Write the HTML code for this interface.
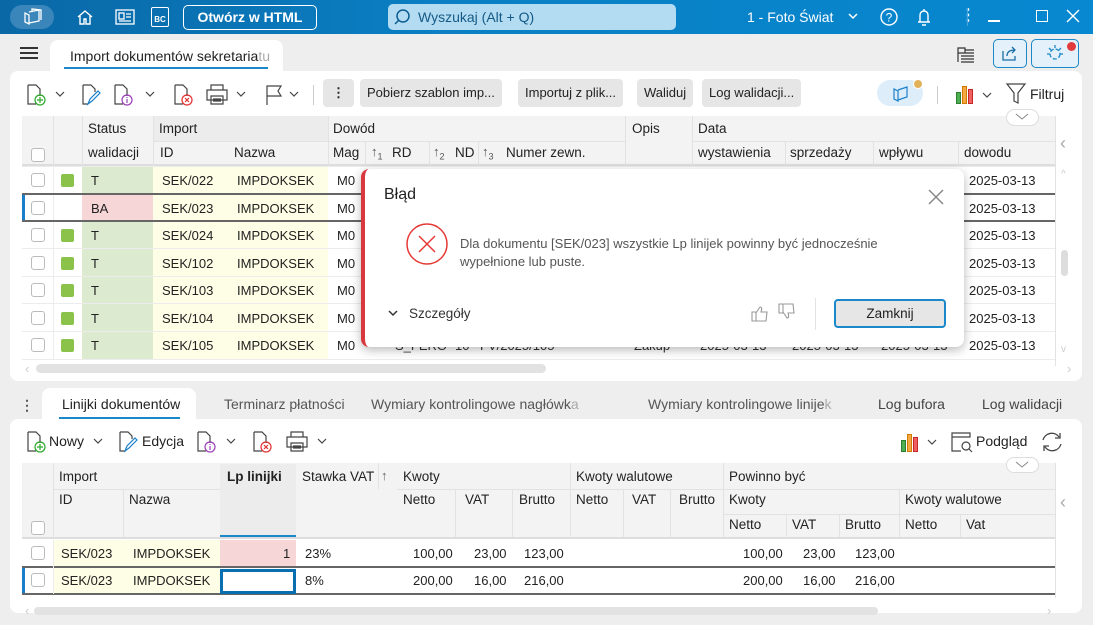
<!DOCTYPE html>
<html><head><meta charset="utf-8"><style>
*{box-sizing:border-box;margin:0;padding:0}
body{width:1093px;height:625px;overflow:hidden;background:#eeeeee;font-family:"Liberation Sans",sans-serif;font-size:13px;color:#222;position:relative}
.a{position:absolute}
.t{position:absolute;white-space:nowrap;line-height:1}
.bar{background:linear-gradient(90deg,#0a68a6,#0a7fc3 40%,#0788d0);height:34px;left:0;top:0;width:1093px}
.panel{background:#fff;border-radius:8px}
.btn{position:absolute;background:#e6e6e6;border-radius:4px;height:28px;line-height:28px;padding:0 7px;font-size:13px;color:#222}
.h{background:#f3f3f3}
.cb{position:absolute;width:14px;height:14px;border:1px solid #bbb;border-radius:3px;background:#fff}
.gs{position:absolute;width:13px;height:13px;background:#8bc34a;border-radius:2px}
</style></head><body>
<div class="a bar"></div>
<div class="a" style="left:10px;top:5px;width:44px;height:24px;border-radius:12px;background:#3a86ba"></div>
<svg class="a" style="left:22px;top:8px" width="22" height="18" viewBox="0 0 22 18" fill="none" stroke="#fff" stroke-width="1.3"><path d="M3 5v9l4 2V7z M7 4l10-2v11l-10 2 M10 3V1l9 1v10"/></svg>
<svg class="a" style="left:76px;top:8px" width="18" height="18" viewBox="0 0 18 18" fill="none" stroke="#fff" stroke-width="1.4"><path d="M2 9l7-6 7 6M4 8v8h4v-5h2v5h4V8"/></svg>
<svg class="a" style="left:115px;top:9px" width="20" height="16" viewBox="0 0 20 16" fill="none" stroke="#fff" stroke-width="1.3"><rect x="1" y="1" width="18" height="14"/><rect x="4" y="4" width="5" height="6"/><path d="M11 5h5M11 8h5M4 12h12"/></svg>
<div class="a" style="left:151px;top:7px;width:18px;height:20px;border:1.3px solid #fff;border-radius:2px;color:#fff;font-size:8px;font-weight:bold;text-align:center;line-height:24px">BC</div>
<div class="a" style="left:183px;top:5px;width:134px;height:25px;border:1px solid #fff;border-radius:5px;color:#fff;font-weight:bold;font-size:14px;text-align:center;line-height:23px">Otwórz w HTML</div>
<div class="a" style="left:388px;top:4px;width:288px;height:26px;background:#b3dcf3;border-radius:5px"></div>
<svg class="a" style="left:393px;top:8px" width="18" height="18" viewBox="0 0 18 18" fill="none" stroke="#0a5d92" stroke-width="1.5"><circle cx="10" cy="8" r="6"/><path d="M6 12l-4 4"/></svg>
<div class="t" style="left:418px;top:10px;color:#155a86;font-size:14px">Wyszukaj (Alt + Q)</div>
<div class="t" style="left:747px;top:10px;color:#fff;font-size:14px">1 - Foto Świat</div>
<svg class="a" style="left:847px;top:12px" width="12" height="8"><path d="M2 2l4 4 4-4" stroke="#fff" stroke-width="1.5" fill="none"/></svg>
<svg class="a" style="left:879px;top:7px" width="20" height="20"><circle cx="10" cy="10" r="8" stroke="#fff" stroke-width="1.4" fill="none"/><text x="10" y="14.5" fill="#fff" font-size="12" text-anchor="middle" font-family="Liberation Sans">?</text></svg>
<svg class="a" style="left:914px;top:6px" width="20" height="22" fill="none" stroke="#fff" stroke-width="1.4"><path d="M4 16h12M6 16V9a4 4 0 018 0v7M10 3v2M8 19h4"/></svg>
<div class="t" style="left:960px;top:8px;color:#fff;font-size:16px;font-weight:bold">⋮</div>
<div class="a" style="left:967px;top:8px;width:1px;height:18px;background:#4aa6dd;left:967px"></div>
<div class="a" style="left:988px;top:20px;width:12px;height:1.5px;background:#fff"></div>
<div class="a" style="left:1036px;top:10px;width:12px;height:12px;border:1.4px solid #fff"></div>
<svg class="a" style="left:1066px;top:9px" width="14" height="14" stroke="#fff" stroke-width="1.4"><path d="M1 1l12 12M13 1L1 13"/></svg>

<div class="a" style="left:20px;top:47px;width:18px;height:2px;background:#333;box-shadow:0 5px 0 #333,0 10px 0 #333"></div>
<div class="a" style="left:50px;top:40px;width:233px;height:36px;background:#fff;border-radius:8px 8px 0 0"></div>
<div class="t" style="left:70px;top:49px;font-size:14px;color:#222">Import dokumentów sekretaria<span style="color:#aaa">tu</span></div>
<div class="a" style="left:64px;top:67px;width:204px;height:2px;background:#1a88c9"></div>
<svg class="a" style="left:955px;top:45px" width="22" height="20" fill="none" stroke="#333" stroke-width="1.2"><path d="M3 3h7v5H3zM3 3v14M10 5h9M10 8h9M6 11h13M6 14h13M6 17h13"/></svg>
<div class="a" style="left:993px;top:39px;width:34px;height:29px;border:1px solid #1a88c9;border-radius:5px;background:#e4f1fa"></div>
<svg class="a" style="left:1001px;top:44px" width="18" height="18" fill="none" stroke="#1a6fa6" stroke-width="1.3"><path d="M2 7v9h12v-4M6 12c0-4 3-6 8-6M11 3l3 3-3 3"/></svg>
<div class="a" style="left:1031px;top:39px;width:48px;height:29px;border:1px solid #1a88c9;border-radius:5px;background:#e4f1fa"></div>
<svg class="a" style="left:1044px;top:43px" width="22" height="22" fill="none" stroke="#1a88c9" stroke-width="1.3"><circle cx="11" cy="11" r="5" stroke-dasharray="4 2"/><path d="M11 2v3M3 11h3M16 11h3M5 5l2 2M17 5l-2 2"/></svg>
<div class="a" style="left:1067px;top:42px;width:9px;height:9px;border-radius:50%;background:#e23b3b"></div>

<div class="a panel" style="left:10px;top:71px;width:1072px;height:310px"></div>
<svg class="a" style="left:25px;top:84px" width="22" height="22" fill="none" stroke-width="1.2"><path d="M3 1h8l4 4v7M3 1v19h8" stroke="#444"/><circle cx="15" cy="16" r="5" stroke="#2aa82a"/><path d="M15 13v6M12 16h6" stroke="#2aa82a"/></svg>
<svg class="a" style="left:55px;top:91px" width="10" height="6"><path d="M1 1l4 4 4-4" stroke="#444" fill="none" stroke-width="1.2"/></svg>
<svg class="a" style="left:80px;top:84px" width="22" height="22" fill="none" stroke-width="1.2"><path d="M3 1h8l4 4v3M3 1v19h5" stroke="#444"/><path d="M8 20l2-5 8-8 2 2-8 8z" stroke="#1a7fc9"/></svg>
<svg class="a" style="left:112px;top:84px" width="22" height="22" fill="none" stroke-width="1.2"><path d="M3 1h8l4 4v7M3 1v19h8" stroke="#444"/><circle cx="15" cy="16" r="5" stroke="#9a3fb5"/><path d="M15 15v4M15 13v1" stroke="#9a3fb5"/></svg>
<svg class="a" style="left:145px;top:91px" width="10" height="6"><path d="M1 1l4 4 4-4" stroke="#444" fill="none" stroke-width="1.2"/></svg>
<svg class="a" style="left:172px;top:84px" width="22" height="22" fill="none" stroke-width="1.2"><path d="M3 1h8l4 4v7M3 1v19h8" stroke="#444"/><circle cx="15" cy="16" r="5" stroke="#e03030"/><path d="M13 14l4 4M17 14l-4 4" stroke="#e03030"/></svg>
<svg class="a" style="left:205px;top:84px" width="24" height="22" fill="none" stroke="#444" stroke-width="1.2"><path d="M6 6V1h12v5M2 6h20v10H2zM6 12h12v8H6zM8 15h8M8 17h8"/></svg>
<svg class="a" style="left:236px;top:91px" width="10" height="6"><path d="M1 1l4 4 4-4" stroke="#444" fill="none" stroke-width="1.2"/></svg>
<svg class="a" style="left:264px;top:84px" width="22" height="22" fill="none" stroke="#444" stroke-width="1.2"><path d="M3 21V2h14l-3 5 3 5H3"/></svg>
<svg class="a" style="left:289px;top:91px" width="10" height="6"><path d="M1 1l4 4 4-4" stroke="#444" fill="none" stroke-width="1.2"/></svg>
<div class="a" style="left:313px;top:85px;width:1px;height:20px;background:#ccc"></div>
<div class="btn" style="left:323px;top:79px;width:31px;text-align:center;font-weight:bold">⋮</div>
<div class="btn" style="left:360px;top:79px">Pobierz szablon imp...</div>
<div class="btn" style="left:518px;top:79px">Importuj z plik...</div>
<div class="btn" style="left:637px;top:79px">Waliduj</div>
<div class="btn" style="left:702px;top:79px">Log walidacji...</div>
<div class="a" style="left:877px;top:80px;width:46px;height:26px;border-radius:13px;background:#ddeefa"></div>
<svg class="a" style="left:891px;top:83px" width="20" height="20" fill="none" stroke="#1a7fc9" stroke-width="1.2"><path d="M3 6v10l4 2V8zM7 7l9-3v10l-9 3"/></svg>
<div class="a" style="left:913px;top:79px;width:10px;height:10px;border-radius:50%;background:#e2b25a;border:1px solid #fff"></div>
<div class="a" style="left:937px;top:86px;width:1px;height:18px;background:#ccc"></div>
<div class="a" style="left:956px;top:92px;width:5px;height:12px;background:#4caf50;border:1px solid #2e7d32"></div>
<div class="a" style="left:962px;top:86px;width:5px;height:18px;background:#f5a742;border:1px solid #d07a00"></div>
<div class="a" style="left:968px;top:89px;width:5px;height:15px;background:#f06060;border:1px solid #c62828"></div>
<svg class="a" style="left:982px;top:92px" width="10" height="6"><path d="M1 1l4 4 4-4" stroke="#444" fill="none" stroke-width="1.2"/></svg>
<svg class="a" style="left:1005px;top:82px" width="22" height="24" fill="none" stroke="#444" stroke-width="1.2"><path d="M2 2h18l-7 9v10l-4-2v-8z"/></svg>
<div class="t" style="left:1030px;top:87px;font-size:14px">Filtruj</div>
<div class="a" style="left:1006px;top:109px;width:33px;height:17px;border-radius:9px;background:#fff;border:1px solid #ddd;z-index:3"></div>
<svg class="a" style="left:1015px;top:113px;z-index:4" width="14" height="8"><path d="M1 1l6 5 6-5" stroke="#888" fill="none"/></svg>

<div class="a h" style="left:22px;top:116px;width:1033px;height:50px;border-bottom:2px solid #ddd"></div>
<div class="a" style="left:1055px;top:116px;width:27px;height:250px;background:#fff;border-left:1px solid #e2e2e2"></div>
<div class="t" style="left:1060px;top:134px;color:#aaa;font-size:18px">‹</div>
<div class="cb" style="left:31px;top:148px"></div>
<div class="a" style="left:53px;top:116px;width:1px;height:50px;background:#e2e2e2"></div>
<div class="a" style="left:82px;top:116px;width:1px;height:50px;background:#e2e2e2"></div>
<div class="t" style="left:88px;top:122px;font-size:13.5px">Status</div>
<div class="t" style="left:88px;top:146px;font-size:13.5px">walidacji</div>
<div class="a" style="left:153px;top:116px;width:175px;height:25px;background:#ececec"></div>
<div class="a" style="left:153px;top:116px;width:1px;height:50px;background:#e2e2e2"></div>
<div class="t" style="left:159px;top:122px;font-size:13.5px">Import</div>
<div class="a" style="left:153px;top:141px;width:902px;height:1px;background:#e2e2e2"></div>
<div class="t" style="left:160px;top:146px;font-size:13.5px">ID</div>
<div class="t" style="left:234px;top:146px;font-size:13.5px">Nazwa</div>
<div class="a" style="left:328px;top:116px;width:1px;height:50px;background:#e2e2e2"></div>
<div class="t" style="left:333px;top:122px;font-size:13.5px">Dowód</div>
<div class="t" style="left:333px;top:146px;font-size:13.5px">Mag</div>
<div class="a" style="left:365px;top:141px;width:1px;height:25px;background:#e2e2e2"></div>
<div class="t" style="left:371px;top:145px;font-size:13px;color:#555">↑<sub style="font-size:9px">1</sub></div>
<div class="t" style="left:392px;top:146px;font-size:13.5px">RD</div>
<div class="a" style="left:429px;top:141px;width:1px;height:25px;background:#e2e2e2"></div>
<div class="t" style="left:433px;top:145px;font-size:13px;color:#555">↑<sub style="font-size:9px">2</sub></div>
<div class="t" style="left:455px;top:146px;font-size:13.5px">ND</div>
<div class="a" style="left:478px;top:141px;width:1px;height:25px;background:#e2e2e2"></div>
<div class="t" style="left:482px;top:145px;font-size:13px;color:#555">↑<sub style="font-size:9px">3</sub></div>
<div class="t" style="left:506px;top:146px;font-size:13.5px">Numer zewn.</div>
<div class="a" style="left:625px;top:116px;width:1px;height:50px;background:#e2e2e2"></div>
<div class="a" style="left:626px;top:141px;width:66px;height:1px;background:#f3f3f3"></div>
<div class="t" style="left:632px;top:122px;font-size:13.5px">Opis</div>
<div class="a" style="left:692px;top:116px;width:1px;height:50px;background:#e2e2e2"></div>
<div class="t" style="left:698px;top:122px;font-size:13.5px">Data</div>
<div class="t" style="left:698px;top:146px;font-size:13.5px">wystawienia</div>
<div class="a" style="left:785px;top:141px;width:1px;height:25px;background:#e2e2e2"></div>
<div class="t" style="left:790px;top:146px;font-size:13.5px">sprzedaży</div>
<div class="a" style="left:873px;top:141px;width:1px;height:25px;background:#e2e2e2"></div>
<div class="t" style="left:879px;top:146px;font-size:13.5px">wpływu</div>
<div class="a" style="left:958px;top:141px;width:1px;height:25px;background:#e2e2e2"></div>
<div class="t" style="left:964px;top:146px;font-size:13.5px">dowodu</div>

<div class="a" style="left:22px;top:167px;width:1033px;height:193px;background:#fff"></div>
<div class="a" style="left:82px;top:167px;width:71px;height:193px;background:#dcebd0"></div>
<div class="a" style="left:82px;top:194px;width:71px;height:27px;background:#f7d6d8"></div>
<div class="a" style="left:153px;top:167px;width:175px;height:193px;background:#fefee6"></div>
<div class="a" style="left:53px;top:167px;width:1px;height:193px;background:#ececec"></div>
<div class="a" style="left:22px;top:193px;width:1033px;height:2px;background:#666"></div>
<div class="a" style="left:22px;top:220px;width:1033px;height:2px;background:#666"></div>
<div class="a" style="left:22px;top:195px;width:3px;height:25px;background:#1a7fc9"></div>
<div class="a" style="left:22px;top:248px;width:1033px;height:1px;background:#ececec"></div>
<div class="a" style="left:22px;top:276px;width:1033px;height:1px;background:#ececec"></div>
<div class="a" style="left:22px;top:303px;width:1033px;height:1px;background:#ececec"></div>
<div class="a" style="left:22px;top:331px;width:1033px;height:1px;background:#ececec"></div>
<div class="a" style="left:22px;top:359px;width:1033px;height:1px;background:#ececec"></div>
<div class="a" style="left:22px;top:166px;width:1033px;height:1px;background:#ececec"></div>

<div class="cb" style="left:31px;top:173px"></div><div class="gs" style="left:61px;top:174px"></div><div class="t" style="left:91px;top:174px">T</div><div class="t" style="left:162px;top:174px">SEK/022</div><div class="t" style="left:237px;top:174px">IMPDOKSEK</div><div class="t" style="left:337px;top:174px">M0</div><div class="t" style="left:969px;top:174px">2025-03-13</div>
<div class="cb" style="left:31px;top:201px"></div><div class="t" style="left:91px;top:202px">BA</div><div class="t" style="left:162px;top:202px">SEK/023</div><div class="t" style="left:237px;top:202px">IMPDOKSEK</div><div class="t" style="left:337px;top:202px">M0</div><div class="t" style="left:969px;top:202px">2025-03-13</div>
<div class="cb" style="left:31px;top:228px"></div><div class="gs" style="left:61px;top:229px"></div><div class="t" style="left:91px;top:229px">T</div><div class="t" style="left:162px;top:229px">SEK/024</div><div class="t" style="left:237px;top:229px">IMPDOKSEK</div><div class="t" style="left:337px;top:229px">M0</div><div class="t" style="left:969px;top:229px">2025-03-13</div>
<div class="cb" style="left:31px;top:256px"></div><div class="gs" style="left:61px;top:257px"></div><div class="t" style="left:91px;top:257px">T</div><div class="t" style="left:162px;top:257px">SEK/102</div><div class="t" style="left:237px;top:257px">IMPDOKSEK</div><div class="t" style="left:337px;top:257px">M0</div><div class="t" style="left:969px;top:257px">2025-03-13</div>
<div class="cb" style="left:31px;top:283px"></div><div class="gs" style="left:61px;top:284px"></div><div class="t" style="left:91px;top:284px">T</div><div class="t" style="left:162px;top:284px">SEK/103</div><div class="t" style="left:237px;top:284px">IMPDOKSEK</div><div class="t" style="left:337px;top:284px">M0</div><div class="t" style="left:969px;top:284px">2025-03-13</div>
<div class="cb" style="left:31px;top:311px"></div><div class="gs" style="left:61px;top:312px"></div><div class="t" style="left:91px;top:312px">T</div><div class="t" style="left:162px;top:312px">SEK/104</div><div class="t" style="left:237px;top:312px">IMPDOKSEK</div><div class="t" style="left:337px;top:312px">M0</div><div class="t" style="left:969px;top:312px">2025-03-13</div>
<div class="cb" style="left:31px;top:338px"></div><div class="gs" style="left:61px;top:339px"></div><div class="t" style="left:91px;top:339px">T</div><div class="t" style="left:162px;top:339px">SEK/105</div><div class="t" style="left:237px;top:339px">IMPDOKSEK</div><div class="t" style="left:337px;top:339px">M0</div><div class="t" style="left:969px;top:339px">2025-03-13</div>
<div class="t" style="left:395px;top:339px;color:#333">S_FERO</div><div class="t" style="left:455px;top:339px;color:#333">10</div><div class="t" style="left:480px;top:339px;color:#333">FV/2025/105</div><div class="t" style="left:634px;top:339px;color:#333">Zakup</div><div class="t" style="left:700px;top:339px;color:#333">2025-03-13</div><div class="t" style="left:792px;top:339px;color:#333">2025-03-13</div><div class="t" style="left:881px;top:339px;color:#333">2025-03-13</div>
<div class="a" style="left:1061px;top:250px;width:7px;height:26px;border-radius:4px;background:#ddd"></div>
<div class="t" style="left:1061px;top:170px;color:#ccc;font-size:10px">^</div>
<div class="t" style="left:1061px;top:345px;color:#ccc;font-size:10px">v</div>
<div class="a" style="left:36px;top:364px;width:510px;height:9px;border-radius:5px;background:#e2e2e2"></div>
<div class="t" style="left:25px;top:362px;color:#ccc;font-size:13px">‹</div>
<div class="t" style="left:1067px;top:362px;color:#ccc;font-size:13px">›</div>

<div class="a" style="left:361px;top:169px;width:603px;height:178px;background:#fff;border-radius:8px;border-left:4px solid #d9383f;box-shadow:0 3px 10px rgba(0,0,0,.28)"></div>
<div class="t" style="left:384px;top:187px;font-size:16px;color:#222">Błąd</div>
<svg class="a" style="left:928px;top:189px" width="16" height="16" stroke="#888" stroke-width="1.5"><path d="M1 1l14 14M15 1L1 15"/></svg>
<svg class="a" style="left:405px;top:222px" width="44" height="44" fill="none" stroke="#e53935" stroke-width="1.5"><circle cx="22" cy="22" r="20"/><path d="M14 14l16 16M30 14L14 30"/></svg>
<div class="t" style="left:460px;top:237px;font-size:13px;color:#555">Dla dokumentu [SEK/023] wszystkie Lp linijek powinny być jednocześnie</div>
<div class="t" style="left:460px;top:255px;font-size:13px;color:#555">wypełnione lub puste.</div>
<svg class="a" style="left:388px;top:310px" width="10" height="7"><path d="M1 1l4 4 4-4" stroke="#333" fill="none" stroke-width="1.5"/></svg>
<div class="t" style="left:409px;top:307px;font-size:13.5px;color:#333">Szczegóły</div>
<svg class="a" style="left:751px;top:305px" width="18" height="17" fill="none" stroke="#999" stroke-width="1.1"><path d="M1 7h4v9H1zM5 8l4-6c2 0 2 2 1 5h6l-1 9H5"/></svg>
<svg class="a" style="left:778px;top:303px" width="18" height="17" fill="none" stroke="#999" stroke-width="1.1"><path d="M1 1h4v9H1zM5 9l4 6c2 0 2-2 1-5h6l-1-9H5"/></svg>
<div class="a" style="left:815px;top:298px;width:1px;height:32px;background:#e2e2e2"></div>
<div class="a" style="left:834px;top:299px;width:112px;height:29px;border:2px solid #1a88c9;border-radius:4px;background:#e6e6e6;text-align:center;line-height:25px;font-size:13.5px">Zamknij</div>

<div class="t" style="left:20px;top:398px;font-size:14px;color:#555;font-weight:bold">⋮</div>
<div class="a" style="left:42px;top:388px;width:154px;height:36px;background:#fff;border-radius:8px 8px 0 0"></div>
<div class="t" style="left:62px;top:397px;font-size:14px;color:#222">Linijki dokumentów</div>
<div class="a" style="left:59px;top:417px;width:121px;height:2px;background:#1a88c9"></div>
<div class="t" style="left:224px;top:397px;font-size:14px;color:#555">Terminarz płatności</div>
<div class="t" style="left:371px;top:397px;font-size:14px;color:#555">Wymiary kontrolingowe nagłówk<span style="color:#aaa">a</span></div>
<div class="t" style="left:648px;top:397px;font-size:14px;color:#555">Wymiary kontrolingowe linije<span style="color:#aaa">k</span></div>
<div class="t" style="left:878px;top:397px;font-size:14px;color:#444">Log bufora</div>
<div class="t" style="left:982px;top:397px;font-size:14px;color:#444">Log walidacji</div>

<div class="a panel" style="left:10px;top:419px;width:1072px;height:194px"></div>
<svg class="a" style="left:25px;top:431px" width="22" height="22" fill="none" stroke-width="1.2"><path d="M3 1h8l4 4v7M3 1v19h8" stroke="#444"/><circle cx="15" cy="16" r="5" stroke="#2aa82a"/><path d="M15 13v6M12 16h6" stroke="#2aa82a"/></svg>
<div class="t" style="left:49px;top:434px;font-size:14px">Nowy</div>
<svg class="a" style="left:93px;top:438px" width="10" height="6"><path d="M1 1l4 4 4-4" stroke="#444" fill="none" stroke-width="1.2"/></svg>
<svg class="a" style="left:117px;top:431px" width="22" height="22" fill="none" stroke-width="1.2"><path d="M3 1h8l4 4v3M3 1v19h5" stroke="#444"/><path d="M8 20l2-5 8-8 2 2-8 8z" stroke="#1a7fc9"/></svg>
<div class="t" style="left:142px;top:434px;font-size:14px">Edycja</div>
<svg class="a" style="left:195px;top:431px" width="22" height="22" fill="none" stroke-width="1.2"><path d="M3 1h8l4 4v7M3 1v19h8" stroke="#444"/><circle cx="15" cy="16" r="5" stroke="#9a3fb5"/><path d="M15 15v4M15 13v1" stroke="#9a3fb5"/></svg>
<svg class="a" style="left:226px;top:438px" width="10" height="6"><path d="M1 1l4 4 4-4" stroke="#444" fill="none" stroke-width="1.2"/></svg>
<svg class="a" style="left:251px;top:431px" width="22" height="22" fill="none" stroke-width="1.2"><path d="M3 1h8l4 4v7M3 1v19h8" stroke="#444"/><circle cx="15" cy="16" r="5" stroke="#e03030"/><path d="M13 14l4 4M17 14l-4 4" stroke="#e03030"/></svg>
<svg class="a" style="left:285px;top:431px" width="24" height="22" fill="none" stroke="#444" stroke-width="1.2"><path d="M6 6V1h12v5M2 6h20v10H2zM6 12h12v8H6zM8 15h8M8 17h8"/></svg>
<svg class="a" style="left:317px;top:438px" width="10" height="6"><path d="M1 1l4 4 4-4" stroke="#444" fill="none" stroke-width="1.2"/></svg>
<div class="a" style="left:901px;top:440px;width:5px;height:12px;background:#4caf50;border:1px solid #2e7d32"></div>
<div class="a" style="left:907px;top:434px;width:5px;height:18px;background:#f5a742;border:1px solid #d07a00"></div>
<div class="a" style="left:913px;top:437px;width:5px;height:15px;background:#f06060;border:1px solid #c62828"></div>
<svg class="a" style="left:927px;top:439px" width="10" height="6"><path d="M1 1l4 4 4-4" stroke="#444" fill="none" stroke-width="1.2"/></svg>
<svg class="a" style="left:951px;top:431px" width="22" height="22" fill="none" stroke="#444" stroke-width="1.2"><path d="M1 2h18v4H1zM1 6v14h9"/><circle cx="15" cy="15" r="4"/><path d="M18 18l3 3"/></svg>
<div class="t" style="left:976px;top:434px;font-size:14px">Podgląd</div>
<svg class="a" style="left:1040px;top:430px" width="24" height="24" fill="none" stroke="#444" stroke-width="1.3"><path d="M3 10a9 9 0 0116-3M20 3v5h-5M21 14a9 9 0 01-16 3M4 21v-5h5"/></svg>
<div class="a" style="left:1006px;top:457px;width:33px;height:16px;border-radius:9px;background:#fff;border:1px solid #ddd;z-index:3"></div>
<svg class="a" style="left:1015px;top:461px;z-index:4" width="14" height="8"><path d="M1 1l6 5 6-5" stroke="#888" fill="none"/></svg>

<div class="a h" style="left:22px;top:463px;width:1033px;height:76px;border-bottom:2px solid #ddd"></div>
<div class="a" style="left:1055px;top:463px;width:27px;height:135px;background:#fff;border-left:1px solid #e2e2e2"></div>
<div class="t" style="left:1060px;top:493px;color:#aaa;font-size:18px">‹</div>
<div class="cb" style="left:31px;top:521px"></div>
<div class="a" style="left:53px;top:463px;width:1px;height:75px;background:#e2e2e2"></div>
<div class="t" style="left:59px;top:470px;font-size:13.5px">Import</div>
<div class="a" style="left:53px;top:489px;width:167px;height:1px;background:#e2e2e2"></div>
<div class="t" style="left:59px;top:493px;font-size:13.5px">ID</div>
<div class="a" style="left:123px;top:489px;width:1px;height:49px;background:#e2e2e2"></div>
<div class="t" style="left:129px;top:493px;font-size:13.5px">Nazwa</div>
<div class="a" style="left:220px;top:464px;width:76px;height:73px;background:#ececec"></div>
<div class="a" style="left:220px;top:535px;width:76px;height:2px;background:#1a88c9"></div>
<div class="t" style="left:227px;top:470px;font-size:13.5px;font-weight:bold">Lp linijki</div>
<div class="t" style="left:302px;top:470px;font-size:13.5px">Stawka VAT</div>
<div class="a" style="left:378px;top:463px;width:1px;height:26px;background:#e2e2e2"></div>
<div class="t" style="left:381px;top:469px;font-size:13px;color:#666">↑</div>
<div class="t" style="left:403px;top:470px;font-size:13.5px">Kwoty</div>
<div class="a" style="left:397px;top:489px;width:658px;height:1px;background:#e2e2e2"></div>
<div class="t" style="left:403px;top:493px;font-size:13.5px">Netto</div>
<div class="a" style="left:455px;top:489px;width:1px;height:49px;background:#e2e2e2"></div>
<div class="t" style="left:465px;top:493px;font-size:13.5px">VAT</div>
<div class="a" style="left:512px;top:489px;width:1px;height:49px;background:#e2e2e2"></div>
<div class="t" style="left:519px;top:493px;font-size:13.5px">Brutto</div>
<div class="a" style="left:570px;top:463px;width:1px;height:75px;background:#e2e2e2"></div>
<div class="t" style="left:576px;top:470px;font-size:13.5px">Kwoty walutowe</div>
<div class="t" style="left:576px;top:493px;font-size:13.5px">Netto</div>
<div class="a" style="left:623px;top:489px;width:1px;height:49px;background:#e2e2e2"></div>
<div class="t" style="left:632px;top:493px;font-size:13.5px">VAT</div>
<div class="a" style="left:670px;top:489px;width:1px;height:49px;background:#e2e2e2"></div>
<div class="t" style="left:679px;top:493px;font-size:13.5px">Brutto</div>
<div class="a" style="left:723px;top:463px;width:1px;height:75px;background:#e2e2e2"></div>
<div class="t" style="left:729px;top:470px;font-size:13.5px">Powinno być</div>
<div class="t" style="left:729px;top:493px;font-size:13.5px">Kwoty</div>
<div class="a" style="left:723px;top:514px;width:332px;height:1px;background:#e2e2e2"></div>
<div class="t" style="left:729px;top:518px;font-size:13.5px">Netto</div>
<div class="a" style="left:786px;top:514px;width:1px;height:24px;background:#e2e2e2"></div>
<div class="t" style="left:792px;top:518px;font-size:13.5px">VAT</div>
<div class="a" style="left:839px;top:514px;width:1px;height:24px;background:#e2e2e2"></div>
<div class="t" style="left:845px;top:518px;font-size:13.5px">Brutto</div>
<div class="a" style="left:899px;top:489px;width:1px;height:49px;background:#e2e2e2"></div>
<div class="t" style="left:905px;top:493px;font-size:13.5px">Kwoty walutowe</div>
<div class="t" style="left:905px;top:518px;font-size:13.5px">Netto</div>
<div class="a" style="left:960px;top:514px;width:1px;height:24px;background:#e2e2e2"></div>
<div class="t" style="left:966px;top:518px;font-size:13.5px">Vat</div>

<div class="a" style="left:22px;top:540px;width:1033px;height:58px;background:#fff"></div>
<div class="a" style="left:53px;top:540px;width:167px;height:54px;background:#fefee6"></div>
<div class="a" style="left:220px;top:540px;width:76px;height:27px;background:#f7d6d8"></div>
<div class="a" style="left:22px;top:566px;width:1033px;height:2px;background:#666"></div>
<div class="a" style="left:22px;top:593px;width:1033px;height:2px;background:#666"></div>
<div class="a" style="left:22px;top:568px;width:3px;height:25px;background:#1a7fc9"></div>
<div class="a" style="left:220px;top:569px;width:76px;height:25px;border:3px solid #0a6fb0;background:#fff"></div>
<div class="a" style="left:53px;top:540px;width:1px;height:54px;background:#ececec"></div>
<div class="cb" style="left:31px;top:546px"></div>
<div class="t" style="left:61px;top:547px">SEK/023</div><div class="t" style="left:133px;top:547px">IMPDOKSEK</div><div class="t" style="left:283px;top:547px">1</div><div class="t" style="left:305px;top:547px">23%</div>
<div class="t" style="left:413px;top:547px">100,00</div><div class="t" style="left:474px;top:547px">23,00</div><div class="t" style="left:524px;top:547px">123,00</div>
<div class="t" style="left:743px;top:547px">100,00</div><div class="t" style="left:803px;top:547px">23,00</div><div class="t" style="left:855px;top:547px">123,00</div>
<div class="cb" style="left:31px;top:573px"></div>
<div class="t" style="left:61px;top:574px">SEK/023</div><div class="t" style="left:133px;top:574px">IMPDOKSEK</div><div class="t" style="left:305px;top:574px">8%</div>
<div class="t" style="left:413px;top:574px">200,00</div><div class="t" style="left:474px;top:574px">16,00</div><div class="t" style="left:524px;top:574px">216,00</div>
<div class="t" style="left:743px;top:574px">200,00</div><div class="t" style="left:803px;top:574px">16,00</div><div class="t" style="left:855px;top:574px">216,00</div>
<div class="a" style="left:34px;top:607px;height:8px;border-radius:5px;background:#e2e2e2;width:844px"></div>
<div class="t" style="left:25px;top:604px;color:#ccc;font-size:13px">‹</div>
<div class="t" style="left:1047px;top:604px;color:#ccc;font-size:13px">›</div>
</body></html>
